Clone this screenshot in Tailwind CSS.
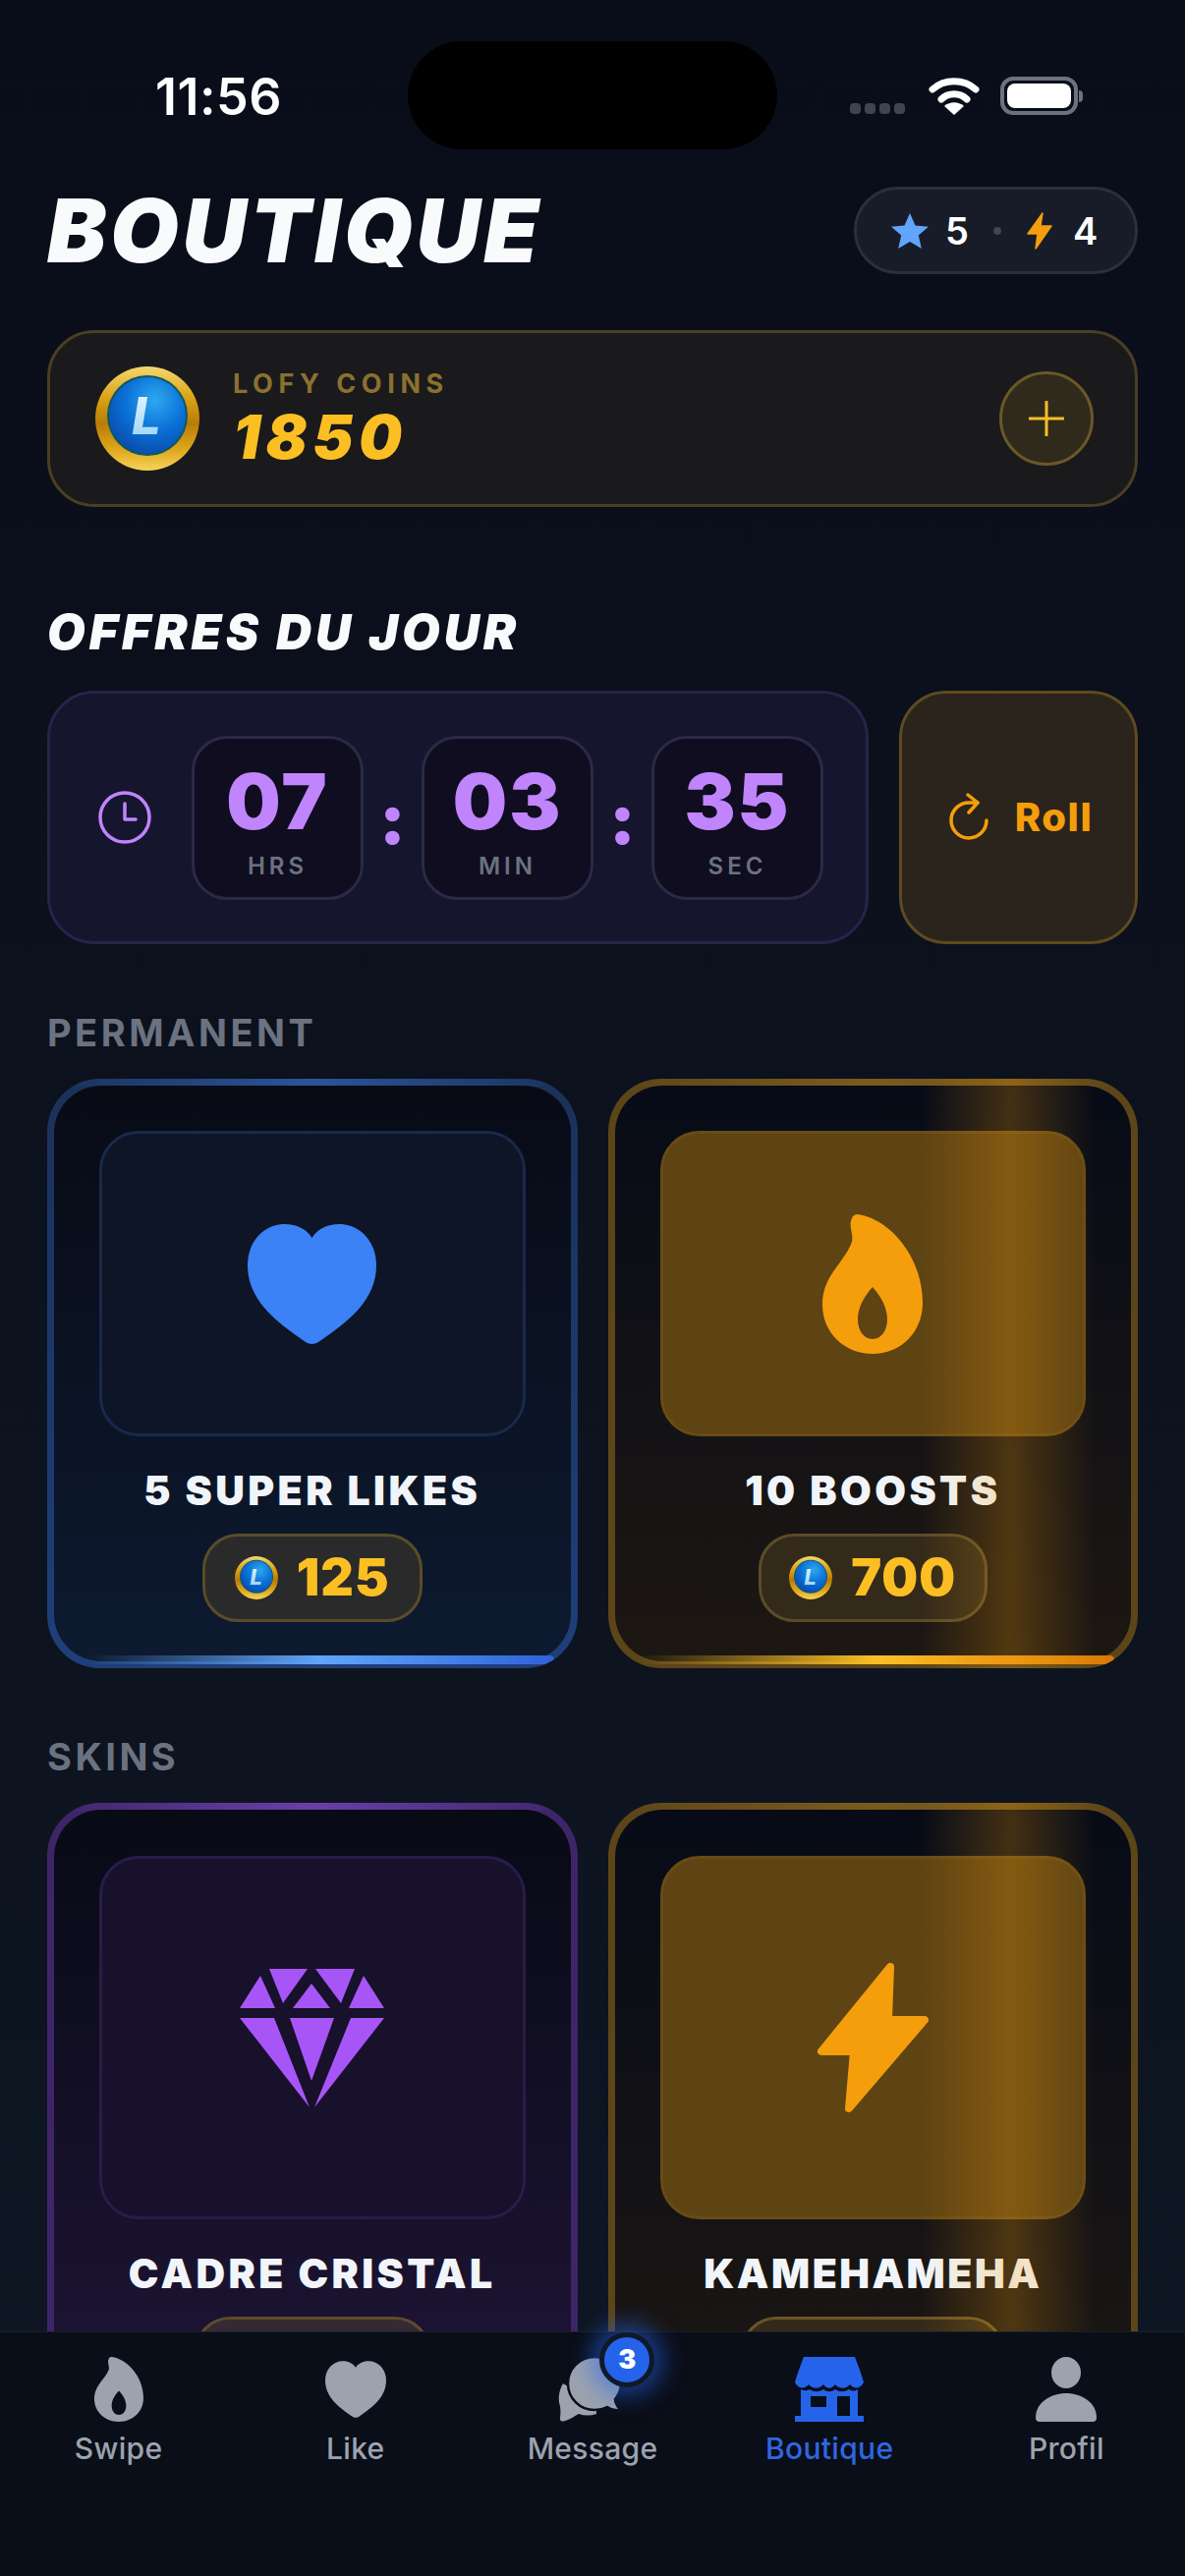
<!DOCTYPE html>
<html lang="fr">
<head>
    <meta charset="UTF-8">
    <meta name="viewport" content="width=device-width, initial-scale=1.0">
    <title>Boutique</title>
    <script src="https://cdn.jsdelivr.net/npm/@tailwindcss/browser@4"></script>
</head>
<body class="w-[1206px] h-[2622px] overflow-hidden [font-family:Inter,sans-serif] bg-gradient-to-b from-[#090d19] via-[#0c121e] to-[#0f1724] text-white">
    <svg width="0" height="0" class="absolute">
        <defs>
            <linearGradient id="goldRing" x1="0" y1="0" x2="0" y2="1">
                <stop offset="0" stop-color="#f5d76e"/>
                <stop offset="0.3" stop-color="#dba316"/>
                <stop offset="0.55" stop-color="#b87c08"/>
                <stop offset="0.8" stop-color="#dfa81c"/>
                <stop offset="1" stop-color="#f7d45a"/>
            </linearGradient>
            <radialGradient id="blueFace" cx="0.6" cy="0.3" r="0.8">
                <stop offset="0" stop-color="#2ea8f0"/>
                <stop offset="0.5" stop-color="#0a70d6"/>
                <stop offset="1" stop-color="#0a44a4"/>
            </radialGradient>
            <linearGradient id="letterFill" x1="0" y1="0" x2="0" y2="1">
                <stop offset="0" stop-color="#f2f9fe"/>
                <stop offset="1" stop-color="#8fd0f5"/>
            </linearGradient>
            <symbol id="coin" viewBox="0 0 106 106">
                <circle cx="53" cy="53" r="53" fill="url(#goldRing)"/>
                <circle cx="53" cy="50" r="41" fill="#0d5a5f"/>
                <circle cx="53" cy="50" r="39" fill="url(#blueFace)"/>
                <text x="52" y="69" text-anchor="middle" font-size="52" font-weight="800" font-style="italic" font-family="Inter, sans-serif" fill="url(#letterFill)">L</text>
            </symbol>
        </defs>
    </svg>

    <div class="flex flex-col h-full">
        <!-- Scrolling content -->
        <main class="flex-1 min-h-0 overflow-hidden">
            <!-- Status bar -->
            <div class="relative h-[190px]">
                <span class="absolute left-[158px] top-[69px] text-[52px] leading-[60px] font-semibold tracking-[0.500px]">11:56</span>
                <div class="absolute left-[415px] top-[42px] w-[376px] h-[110px] rounded-[55px] bg-black"></div>
                <div class="absolute left-[865px] top-[105px] flex gap-[4px]">
                    <div class="w-[11px] h-[11px] rounded-[4px] bg-[#3f444f]"></div>
                    <div class="w-[11px] h-[11px] rounded-[4px] bg-[#3f444f]"></div>
                    <div class="w-[11px] h-[11px] rounded-[4px] bg-[#3f444f]"></div>
                    <div class="w-[11px] h-[11px] rounded-[4px] bg-[#3f444f]"></div>
                </div>
                <svg class="absolute left-[945px] top-[78px]" width="52" height="39" viewBox="0 0 52 39" fill="none" stroke="#fff" stroke-width="7" stroke-linecap="round">
                    <path d="M4 13 C16 2 36 2 48 13"/>
                    <path d="M13 23 C20 16 32 16 39 23"/>
                    <path d="M26 39 L16 30 C22 25 30 25 36 30Z" fill="#fff" stroke="none"/>
                </svg>
                <div class="absolute left-[1018px] top-[78px] flex items-center">
                    <div class="w-[79px] h-[39px] rounded-[13px] border-[4px] border-[#6b7280] p-[3px]">
                        <div class="w-full h-full rounded-[8px] bg-white"></div>
                    </div>
                    <div class="ml-[1px] w-[4px] h-[12px] rounded-r-full bg-[#6b7280]"></div>
                </div>
            </div>

            <div class="px-[48px]">
                <!-- Header -->
                <div class="flex items-center justify-between h-[89px]">
                    <h1 class="text-[90px] leading-none font-black italic tracking-[3.800px] text-[#f8fafc]">BOUTIQUE</h1>
                    <div class="w-[289px] h-[89px] rounded-full border-[3px] border-[#2a2f3b] bg-[#171c28] flex items-center pl-[35px]">
                        <svg width="38" height="36" viewBox="0 0 38 36"><path d="M19 0 L24.500 12.500 L38 13.700 L27.800 22.600 L30.800 36 L19 29 L7.200 36 L10.200 22.600 L0 13.700 L13.500 12.500Z" fill="#60a5fa"/></svg>
                        <span class="ml-[17px] text-[38px] font-semibold leading-none">5</span>
                        <div class="ml-[25px] w-[8px] h-[8px] rounded-full bg-[#414652]"></div>
                        <svg class="ml-[25px]" width="28" height="38" viewBox="0 0 28 38"><path d="M17 1 L2 22 H12 L10 37 L26 14 H15Z" fill="#f59e0b" stroke="#f59e0b" stroke-width="1.500" stroke-linejoin="round"/></svg>
                        <span class="ml-[20px] text-[38px] font-semibold leading-none">4</span>
                    </div>
                </div>

                <!-- Coins -->
                <div class="mt-[57px] h-[180px] rounded-[48px] border-[3px] border-[#4a3f23] bg-[#1a1a1c] flex items-center pl-[46px] pr-[42px]">
                    <svg width="106" height="106"><use href="#coin"/></svg>
                    <div class="ml-[34px] flex-1">
                        <div class="text-[27px] leading-[32px] font-bold tracking-[5.600px] text-[#8b7130]">LOFY COINS</div>
                        <div class="mt-[6px] text-[62px] leading-[64px] font-black italic tracking-[5.500px] text-[#fbbf24]">1850</div>
                    </div>
                    <div class="w-[96px] h-[96px] rounded-full border-[3px] border-[#6a5827] bg-[#302a1c] flex items-center justify-center">
                        <svg width="36" height="36" viewBox="0 0 36 36" stroke="#fbbf24" stroke-width="3" stroke-linecap="round"><path d="M18 1V35M1 18H35"/></svg>
                    </div>
                </div>

                <!-- Daily offers -->
                <h2 class="mt-[102px] text-[50px] leading-[50px] font-black italic tracking-[4px] text-[#f8fafc]">OFFRES DU JOUR</h2>
                <div class="mt-[35px] flex gap-[31px] h-[258px]">
                    <div class="w-[836px] rounded-[48px] border-[3px] border-[#262448] bg-[#15152d] flex items-center pl-[49px]">
                        <svg width="54" height="54" viewBox="0 0 54 54" fill="none" stroke="#c084fc" stroke-width="3.500" stroke-linecap="round" stroke-linejoin="round"><circle cx="27" cy="27" r="25"/><path d="M27 13V29H38"/></svg>
                        <div class="ml-[41px] flex items-center">
                            <div class="w-[175px] h-[167px] rounded-[36px] border-[3px] border-[#2b2a46] bg-[#0f0d1f] flex flex-col items-center pt-[25px]">
                                <span class="text-[78px] leading-[78px] font-black tracking-[2px] text-[#c084fc]">07</span>
                                <span class="mt-[14px] text-[24px] leading-[26px] font-semibold tracking-[4px] text-[#6b7280]">HRS</span>
                            </div>
                            <span class="w-[59px] text-center text-[72px] leading-none font-black text-[#c084fc] mt-[2px]">:</span>
                            <div class="w-[175px] h-[167px] rounded-[36px] border-[3px] border-[#2b2a46] bg-[#0f0d1f] flex flex-col items-center pt-[25px]">
                                <span class="text-[78px] leading-[78px] font-black tracking-[2px] text-[#c084fc]">03</span>
                                <span class="mt-[14px] text-[24px] leading-[26px] font-semibold tracking-[4px] text-[#6b7280]">MIN</span>
                            </div>
                            <span class="w-[59px] text-center text-[72px] leading-none font-black text-[#c084fc] mt-[2px]">:</span>
                            <div class="w-[175px] h-[167px] rounded-[36px] border-[3px] border-[#2b2a46] bg-[#0f0d1f] flex flex-col items-center pt-[25px]">
                                <span class="text-[78px] leading-[78px] font-black tracking-[2px] text-[#c084fc]">35</span>
                                <span class="mt-[14px] text-[24px] leading-[26px] font-semibold tracking-[4px] text-[#6b7280]">SEC</span>
                            </div>
                        </div>
                    </div>
                    <div class="flex-1 rounded-[48px] border-[3px] border-[#5f4a20] bg-[#2b241c] flex items-center justify-center gap-[26px] pl-[4px]">
                        <svg width="42" height="50" viewBox="0 0 42 50" fill="none" stroke="#f59e0b" stroke-width="3.500" stroke-linecap="round" stroke-linejoin="round"><path d="M30 10 H22 A18 18 0 1 0 39 28"/><path d="M20 2 L30 10 L21 20"/></svg>
                        <span class="text-[40px] leading-none font-extrabold tracking-[1.500px] text-[#f59e0b]">Roll</span>
                    </div>
                </div>

                <!-- Permanent -->
                <h3 class="mt-[68px] text-[38px] leading-[44px] font-bold tracking-[3.500px] text-[#6b7280]">PERMANENT</h3>
                <div class="mt-[25px] grid grid-cols-2 gap-[31px]">
                    <div class="relative overflow-hidden rounded-[54px] p-[7px] bg-gradient-to-b from-[#1a3159] to-[#1f3f7a]">
                        <div class="absolute top-0 left-0 right-0 h-[8px] bg-gradient-to-r from-transparent via-[#2b5499] to-transparent"></div>
                        <div class="relative h-full rounded-[48px] bg-gradient-to-b from-[#080b16] to-[#0d1a30] px-[46px] pt-[46px] pb-[40px]">
                            <div class="h-[311px] rounded-[40px] border-[3px] border-[#19294a] bg-[#0d1526] flex items-center justify-center">
                                <svg width="131" height="122" viewBox="0 0 131 122"><path d="M65.500 122 C62.500 122 60 121 57.500 119 C30 100 0 78 0 42 C0 17 17 0 38 0 C50 0 60 5 65.500 14 C71 5 81 0 93 0 C114 0 131 17 131 42 C131 78 101 100 73.500 119 C71 121 68.500 122 65.500 122Z" fill="#3b82f6"/></svg>
                            </div>
                            <div class="mt-[30px] text-center text-[41px] leading-[50px] font-black tracking-[3.400px] text-[#f1f5f9]">5 SUPER LIKES</div>
                            <div class="mt-[19px] mx-auto w-[224px] h-[90px] rounded-[36px] border-[3px] border-[#5a4c28] bg-[#2a2a2a] flex items-center justify-center gap-[19px]">
                                <svg width="44" height="44"><use href="#coin"/></svg>
                                <span class="text-[52px] leading-none font-black tracking-[1px] text-[#fbbf24]">125</span>
                            </div>
                        </div>
                        <div class="absolute bottom-[4px] left-[40px] right-[24px] h-[9px] rounded-r-[8px] bg-gradient-to-r from-transparent via-[#60a5fa] to-[#2f62d8]"></div>
                    </div>

                    <div class="relative overflow-hidden rounded-[54px] p-[7px] bg-[#5c4518]">
                        <div class="absolute top-0 left-0 right-0 h-[8px] bg-gradient-to-r from-transparent via-[#7a5b1d] to-transparent"></div>
                        <div class="relative h-full rounded-[48px] bg-gradient-to-b from-[#070b17] to-[#1d1712] px-[46px] pt-[46px] pb-[40px]">
                            <div class="h-[311px] rounded-[40px] border-[3px] border-[#684b16] bg-[#5e4313] flex items-center justify-center">
                                <svg width="102" height="142" viewBox="0 0 102 142"><path fill-rule="evenodd" d="M36 0 C70 5 102 45 102 90 C102 120 80 142 51 142 C22 142 0 120 0 92 C0 62 22 50 30 28 C32 20 26 12 30 4 C31 1 33 0 36 0Z M51 74 C42 84 36 95 36 107 C36 118 42 127 51 127 C60 127 66 118 66 107 C66 95 60 84 51 74Z" fill="#f59e0b"/></svg>
                            </div>
                            <div class="mt-[30px] text-center text-[41px] leading-[50px] font-black tracking-[3.400px] text-[#f1f5f9]">10 BOOSTS</div>
                            <div class="mt-[19px] mx-auto w-[233px] h-[90px] rounded-[36px] border-[3px] border-[#5a4c28] bg-[#332a1a] flex items-center justify-center gap-[19px]">
                                <svg width="44" height="44"><use href="#coin"/></svg>
                                <span class="text-[52px] leading-none font-black tracking-[1px] text-[#fbbf24]">700</span>
                            </div>
                        </div>
                        <div class="absolute bottom-[4px] left-[30px] right-[24px] h-[9px] rounded-r-[8px] bg-gradient-to-r from-transparent via-[#fbbf24] to-[#d97706]"></div>
                        <div class="absolute inset-0 bg-gradient-to-r from-transparent from-[59%] via-[#f59e0b]/25 via-[76%] to-transparent to-[92%]"></div>
                    </div>
                </div>

                <!-- Skins -->
                <h3 class="mt-[68px] text-[38px] leading-[44px] font-bold tracking-[3.500px] text-[#6b7280]">SKINS</h3>
                <div class="mt-[25px] grid grid-cols-2 gap-[31px]">
                    <div class="relative overflow-hidden rounded-[54px] p-[7px] bg-[#3e2568]">
                        <div class="absolute top-0 left-0 right-0 h-[8px] bg-gradient-to-r from-transparent via-[#6a3fa8] to-transparent"></div>
                        <div class="relative rounded-[48px] bg-gradient-to-b from-[#080a16] to-[#201538] px-[46px] pt-[47px] pb-[40px]">
                            <div class="h-[370px] rounded-[40px] border-[3px] border-[#2a1c48] bg-[#17112b] flex items-center justify-center">
                                <svg width="147" height="142" viewBox="0 0 147 142" fill="#a855f7"><path d="M30 1H69L44 36Z M77 1H117L103 36Z M21 8L36 41H0Z M126 8L147 41H111Z M73 16L92 41H54Z M0 51H35L71 142Z M51 51H96L73 115Z M113 51H147L76 142Z"/></svg>
                            </div>
                            <div class="mt-[30px] text-center text-[41px] leading-[50px] font-black tracking-[3.400px] text-[#f1f5f9]">CADRE CRISTAL</div>
                            <div class="mt-[19px] mx-auto w-[240px] h-[90px] rounded-[36px] border-[3px] border-[#5f4a2c] bg-[#352a33]"></div>
                        </div>
                    </div>

                    <div class="relative overflow-hidden rounded-[54px] p-[7px] bg-[#5c4518]">
                        <div class="absolute top-0 left-0 right-0 h-[8px] bg-gradient-to-r from-transparent via-[#7a5b1d] to-transparent"></div>
                        <div class="relative rounded-[48px] bg-gradient-to-b from-[#070b17] to-[#1d1712] px-[46px] pt-[47px] pb-[40px]">
                            <div class="h-[370px] rounded-[40px] border-[3px] border-[#684b16] bg-[#5e4313] flex items-center justify-center">
                                <svg width="114" height="154" viewBox="0 0 114 154"><path d="M75 5 L5 91 H38 L33 149 L110 59 H73Z" fill="#f59e0b" stroke="#f59e0b" stroke-width="8" stroke-linejoin="round"/></svg>
                            </div>
                            <div class="mt-[30px] text-center text-[41px] leading-[50px] font-black tracking-[2.500px] text-[#f1f5f9]">KAMEHAMEHA</div>
                            <div class="mt-[19px] mx-auto w-[268px] h-[90px] rounded-[36px] border-[3px] border-[#6a5527] bg-[#332a1a]"></div>
                        </div>
                        <div class="absolute inset-0 bg-gradient-to-r from-transparent from-[59%] via-[#f59e0b]/25 via-[76%] to-transparent to-[92%]"></div>
                    </div>
                </div>
            </div>
        </main>

        <!-- Bottom navigation -->
        <nav class="relative h-[249px] shrink-0 border-t border-[#1a1f2b] bg-[#0a0e18] grid grid-cols-5 pt-[25px] text-[#9ca3af]">
            <div class="flex flex-col items-center">
                <svg width="50" height="66" viewBox="0 0 102 142" preserveAspectRatio="none"><path fill-rule="evenodd" d="M36 0 C70 5 102 45 102 90 C102 120 80 142 51 142 C22 142 0 120 0 92 C0 62 22 50 30 28 C32 20 26 12 30 4 C31 1 33 0 36 0Z M51 74 C42 84 36 95 36 107 C36 118 42 127 51 127 C60 127 66 118 66 107 C66 95 60 84 51 74Z" fill="#9ca3af"/></svg>
                <span class="mt-[9px] text-[30px] leading-[36px] font-medium tracking-[0.300px]">Swipe</span>
            </div>
            <div class="flex flex-col items-center">
                <svg class="my-[4px]" width="62" height="58" viewBox="0 0 131 122"><path d="M65.500 122 C62.500 122 60 121 57.500 119 C30 100 0 78 0 42 C0 17 17 0 38 0 C50 0 60 5 65.500 14 C71 5 81 0 93 0 C114 0 131 17 131 42 C131 78 101 100 73.500 119 C71 121 68.500 122 65.500 122Z" fill="#9ca3af"/></svg>
                <span class="mt-[9px] text-[30px] leading-[36px] font-medium tracking-[0.300px]">Like</span>
            </div>
            <div class="relative flex flex-col items-center">
                <svg class="-ml-[4px]" width="66" height="66" viewBox="0 0 66 66">
                    <path d="M5 27 C0 36 0 44 2 50 C3 56 2 60 2 63 C2 66 5 66 7 65 C12 64 17 60 21 58 C27 60 33 60 39 58 L39 50 L10 30Z" fill="#9ca3af"/>
                    <path d="M37 0 C22 0 10 12 10 27 C10 42 22 54 37 54 C42 54 46 53 50 51 C54 54 58 55 63 54 C60 50 58 47 58 43 C62 38 64 33 64 27 C64 12 52 0 37 0Z" fill="#9ca3af" stroke="#0a0e18" stroke-width="2.500"/>
                </svg>
                <span class="mt-[9px] text-[30px] leading-[36px] font-medium tracking-[0.300px]">Message</span>
                <div class="absolute left-[128px] top-[-25px] w-[56px] h-[56px] rounded-full border-[5px] border-[#111827] bg-[#2563eb] shadow-[0_0_22px_10px_rgba(37,99,235,0.5)] flex items-center justify-center text-[27px] font-black text-white">3</div>
            </div>
            <div class="flex flex-col items-center text-[#2f66e0]">
                <svg width="70" height="66" viewBox="0 0 70 66" fill="#2563eb">
                    <path d="M9 0 H61 C64 8 68 18 70 26 C66 33 60 33 56 28 C52 33 45 33 41 28 C37 33 33 33 29 28 C25 33 18 33 14 28 C10 33 4 33 0 26 C2 18 6 8 9 0Z"/>
                    <path fill-rule="evenodd" d="M6 33 C10 35 14 34 15 33 C20 36 24 36 29 33 C33 36 37 36 41 33 C46 36 50 36 55 33 C58 35 61 35 64 33 V60 H70 V66 H0 V60 H6Z M16 40 H32 V51 H16Z M43 40 H56 V60 H43Z"/>
                </svg>
                <span class="mt-[9px] text-[30px] leading-[36px] font-medium tracking-[0.300px]">Boutique</span>
            </div>
            <div class="flex flex-col items-center">
                <svg width="62" height="66" viewBox="0 0 62 66" fill="#9ca3af"><ellipse cx="31" cy="16" rx="15" ry="16"/><path d="M31 37 C46 37 62 46 62 62 C62 64 61 66 58 66 H4 C1 66 0 64 0 62 C0 46 16 37 31 37Z"/></svg>
                <span class="mt-[9px] text-[30px] leading-[36px] font-medium tracking-[0.300px]">Profil</span>
            </div>
        </nav>
    </div>
</body>
</html>
